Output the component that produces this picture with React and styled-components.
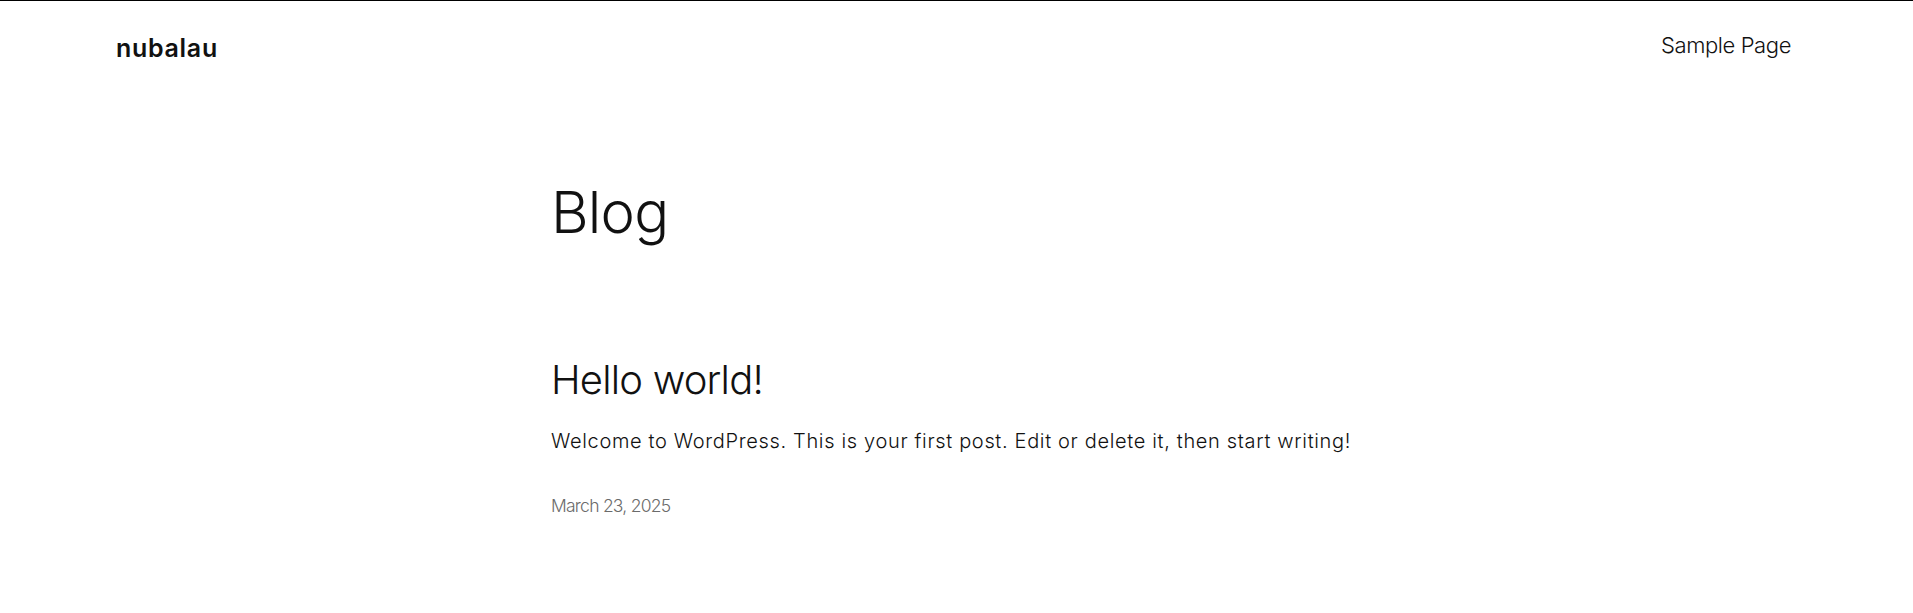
import React from "react";
import styled, { createGlobalStyle } from "styled-components";

const GlobalStyle = createGlobalStyle`
  html, body {
    margin: 0;
    padding: 0;
    background: #fff;
  }
  body {
    font-family: Inter, "Noto Sans", "Liberation Sans", sans-serif;
    color: #111;
    -webkit-font-smoothing: antialiased;
  }
`;

const Page = styled.div`
  border-top: 1px solid #000;
  min-height: 612px;
  background: #fff;
`;

const Header = styled.header`
  display: flex;
  justify-content: space-between;
  align-items: flex-start;
  padding: 33px 122px 0 116px;
  height: 27px;
`;

const SiteTitle = styled.a`
  margin-top: 2px;
  font-size: 25px;
  line-height: 25px;
  font-weight: 600;
  letter-spacing: 0.7px;
  color: #111;
  text-decoration: none;
`;

const Nav = styled.nav`
  display: flex;
  gap: 24px;
`;

const NavLink = styled.a`
  font-size: 22px;
  line-height: 22px;
  font-weight: 300;
  letter-spacing: -0.4px;
  color: #111;
  text-decoration: none;
`;

const Main = styled.main`
  width: 811px;
  margin: 0 auto;
  padding-top: 116px;
`;

const PageTitle = styled.h1`
  margin: 0;
  font-size: 58px;
  line-height: 70px;
  font-weight: 300;
  letter-spacing: -0.8px;
  color: #111;
`;

const Post = styled.article`
  margin-top: 109px;
  display: flex;
  flex-direction: column;
`;

const PostTitle = styled.h2`
  margin: 0;
  font-size: 40px;
  line-height: 48px;
  font-weight: 300;
  letter-spacing: -0.8px;
  color: #111;
`;

const Excerpt = styled.p`
  margin: 22px 0 0;
  font-size: 20px;
  line-height: 30px;
  font-weight: 300;
  letter-spacing: 0.66px;
  white-space: nowrap;
  color: #111;
`;

const PostDate = styled.time`
  margin-top: 37px;
  font-size: 17.5px;
  line-height: 26px;
  font-weight: 300;
  letter-spacing: -0.75px;
  color: #6b6b6b;
`;

export default function App() {
  return (
    <>
      <GlobalStyle />
      <Page>
        <Header>
          <SiteTitle href="#">nubalau</SiteTitle>
          <Nav>
            <NavLink href="#">Sample Page</NavLink>
          </Nav>
        </Header>
        <Main>
          <PageTitle>Blog</PageTitle>
          <Post>
            <PostTitle>Hello world!</PostTitle>
            <Excerpt>
              Welcome to WordPress. This is your first post. Edit or delete it,
              then start writing!
            </Excerpt>
            <PostDate dateTime="2025-03-23">March 23, 2025</PostDate>
          </Post>
        </Main>
      </Page>
    </>
  );
}
